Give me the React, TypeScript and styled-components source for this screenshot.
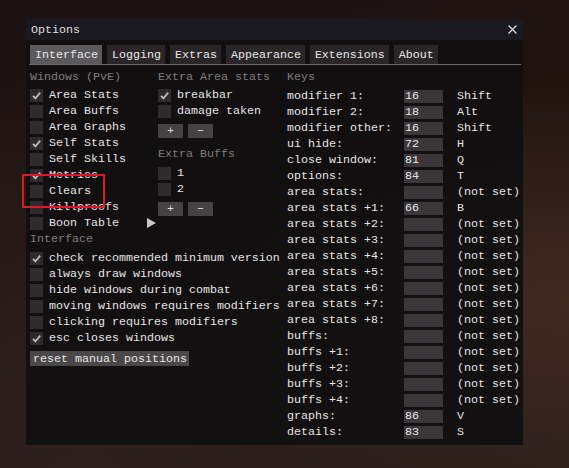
import React from "react";
import styled, { createGlobalStyle } from "styled-components";

const GlobalStyle = createGlobalStyle`
  html, body {
    margin: 0;
    padding: 0;
    background: #1a100d;
  }
  * {
    box-sizing: border-box;
  }
`;

const Page = styled.div`
  position: relative;
  width: 569px;
  height: 468px;
  overflow: hidden;
  padding: 19px 0 0 26px;
  background:
    radial-gradient(ellipse at 100% 65%, #40291f 0%, rgba(64, 41, 31, 0) 50%),
    radial-gradient(ellipse at 15% 100%, #2f2020 0%, rgba(47, 32, 32, 0) 60%),
    linear-gradient(165deg, #1b1214 0%, #22150f 45%, #2c1f1d 100%);
  font-family: "Liberation Mono", "DejaVu Sans Mono", monospace;
  font-size: 11.67px;
  color: #e6e6e6;
`;

const Window = styled.div`
  width: 497px;
  height: 426px;
  background: rgba(18, 15, 17, 0.97);
  display: flex;
  flex-direction: column;
`;

const TitleBar = styled.div`
  height: 21px;
  background: #1b1920;
  display: flex;
  align-items: center;
  justify-content: space-between;
  padding: 0 6px 0 5px;
  color: #dedede;
`;

const Close = styled.svg`
  width: 9px;
  height: 9px;
  display: block;
`;

const TabBar = styled.div`
  display: flex;
  gap: 5px;
  margin: 5px 2px 0 3px;
  padding-left: 1px;
  border-bottom: 1px solid #6b6869;
`;

const Tab = styled.div<{ $active?: boolean }>`
  height: 19px;
  padding: 0 4px 0 5px;
  display: flex;
  align-items: center;
  background: ${(p) => (p.$active ? "#5b595c" : "#2a2628")};
  color: #e6e6e6;
`;

const Content = styled.div`
  display: grid;
  grid-template-columns: 128px 129px 1fr;
  padding: 4px 0 0 4px;
`;

const Column = styled.div`
  display: flex;
  flex-direction: column;
  white-space: nowrap;
`;

const Header = styled.div<{ $top?: number; $bottom?: number }>`
  height: 16px;
  line-height: 16px;
  color: #7f7c7d;
  margin-top: ${(p) => p.$top ?? 0}px;
  margin-bottom: ${(p) => p.$bottom ?? 2}px;
`;

const CheckRow = styled.div`
  height: 16px;
  display: flex;
  align-items: center;
  gap: 6px;
`;

const Box = styled.div`
  width: 13px;
  height: 13px;
  flex: none;
  background: #2e2a2d;
  display: flex;
  align-items: center;
  justify-content: center;
`;

const Arrow = styled.svg`
  width: 9px;
  height: 10px;
  margin-left: 22px;
  display: block;
`;

const ButtonRow = styled.div`
  display: flex;
  gap: 5px;
  margin-top: 5px;
`;

const SmallButton = styled.div`
  width: 25px;
  height: 14px;
  background: #464244;
  color: #e0e0e0;
  display: flex;
  align-items: center;
  justify-content: center;
  font-size: 11px;
`;

const WideButton = styled.div`
  align-self: flex-start;
  margin-top: 5px;
  height: 15px;
  padding: 0 2px 0 3px;
  display: flex;
  align-items: center;
  background: #4a4749;
  color: #e6e6e6;
`;

const KeyRow = styled.div`
  height: 16px;
  display: flex;
  align-items: center;
`;

const KeyLabel = styled.div`
  width: 117px;
`;

const KeyInput = styled.div`
  width: 39px;
  height: 13px;
  background: #3a3639;
  padding-left: 1px;
  display: flex;
  align-items: center;
`;

const KeyName = styled.div`
  margin-left: 14px;
`;

const Highlight = styled.div`
  position: absolute;
  left: 22px;
  top: 174px;
  width: 83px;
  height: 34px;
  border: 2px solid #e0191b;
  pointer-events: none;
`;

function Check({ on, label }: { on?: boolean; label: string }) {
  return (
    <CheckRow>
      <Box>
        {on && (
          <svg width="13" height="13" viewBox="0 0 13 13">
            <polyline
              points="3,6.8 5.4,9.4 10.2,3.6"
              fill="none"
              stroke="#bdbbbc"
              strokeWidth="1.7"
            />
          </svg>
        )}
      </Box>
      {label}
    </CheckRow>
  );
}

const windows: [string, boolean][] = [
  ["Area Stats", true],
  ["Area Buffs", false],
  ["Area Graphs", false],
  ["Self Stats", true],
  ["Self Skills", false],
  ["Metrics", true],
  ["Clears", false],
  ["Killproofs", false],
];

const iface: [string, boolean][] = [
  ["check recommended minimum version", true],
  ["always draw windows", false],
  ["hide windows during combat", false],
  ["moving windows requires modifiers", false],
  ["clicking requires modifiers", false],
  ["esc closes windows", true],
];

const keys: [string, string, string][] = [
  ["modifier 1:", "16", "Shift"],
  ["modifier 2:", "18", "Alt"],
  ["modifier other:", "16", "Shift"],
  ["ui hide:", "72", "H"],
  ["close window:", "81", "Q"],
  ["options:", "84", "T"],
  ["area stats:", "", "(not set)"],
  ["area stats +1:", "66", "B"],
  ["area stats +2:", "", "(not set)"],
  ["area stats +3:", "", "(not set)"],
  ["area stats +4:", "", "(not set)"],
  ["area stats +5:", "", "(not set)"],
  ["area stats +6:", "", "(not set)"],
  ["area stats +7:", "", "(not set)"],
  ["area stats +8:", "", "(not set)"],
  ["buffs:", "", "(not set)"],
  ["buffs +1:", "", "(not set)"],
  ["buffs +2:", "", "(not set)"],
  ["buffs +3:", "", "(not set)"],
  ["buffs +4:", "", "(not set)"],
  ["graphs:", "86", "V"],
  ["details:", "83", "S"],
];

const tabs = ["Interface", "Logging", "Extras", "Appearance", "Extensions", "About"];

export default function App() {
  return (
    <>
      <GlobalStyle />
      <Page>
        <Window>
          <TitleBar>
            <span>Options</span>
            <Close viewBox="0 0 9 9">
              <path d="M0.5 0.5 L8.5 8.5 M8.5 0.5 L0.5 8.5" stroke="#d8d8d8" strokeWidth="1.3" />
            </Close>
          </TitleBar>
          <TabBar>
            {tabs.map((t, i) => (
              <Tab key={t} $active={i === 0}>
                {t}
              </Tab>
            ))}
          </TabBar>
          <Content>
            <Column>
              <Header>Windows (PvE)</Header>
              {windows.map(([l, on]) => (
                <Check key={l} label={l} on={on} />
              ))}
              <CheckRow>
                <Box />
                Boon Table
                <Arrow viewBox="0 0 9 10">
                  <polygon points="0,0 9,5 0,10" fill="#c9c7c8" />
                </Arrow>
              </CheckRow>
              <Header $bottom={3}>Interface</Header>
              {iface.map(([l, on]) => (
                <Check key={l} label={l} on={on} />
              ))}
              <WideButton>reset manual positions</WideButton>
            </Column>
            <Column>
              <Header>Extra Area stats</Header>
              <Check label="breakbar" on />
              <Check label="damage taken" />
              <ButtonRow>
                <SmallButton>+</SmallButton>
                <SmallButton>−</SmallButton>
              </ButtonRow>
              <Header $top={8} $bottom={3}>
                Extra Buffs
              </Header>
              <Check label="1" />
              <Check label="2" />
              <ButtonRow>
                <SmallButton>+</SmallButton>
                <SmallButton>−</SmallButton>
              </ButtonRow>
            </Column>
            <Column>
              <Header $bottom={3}>Keys</Header>
              {keys.map(([l, v, k]) => (
                <KeyRow key={l}>
                  <KeyLabel>{l}</KeyLabel>
                  <KeyInput>{v}</KeyInput>
                  <KeyName>{k}</KeyName>
                </KeyRow>
              ))}
            </Column>
          </Content>
        </Window>
        <Highlight />
      </Page>
    </>
  );
}
